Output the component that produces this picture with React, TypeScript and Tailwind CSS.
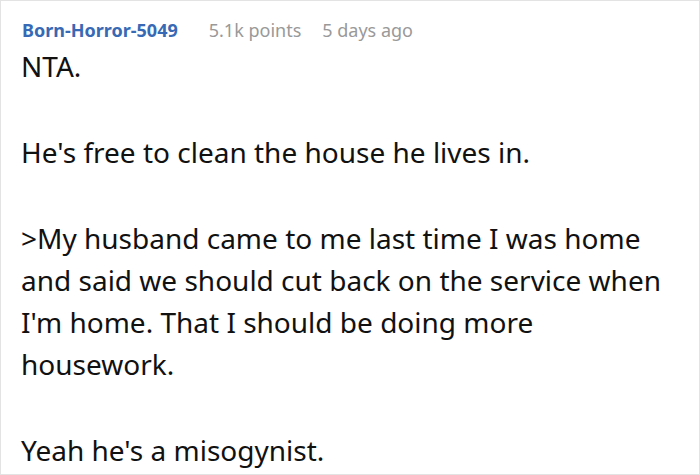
export default function App() {
  return (
    <div className="w-[700px] h-[475px] border border-[#e3e3e3] bg-white overflow-hidden" style={{ fontFamily: '"Noto Sans", sans-serif' }}>
      <div className="pl-[21px] pt-[16px] flex items-baseline text-[18px] leading-[26px]">
        <span className="font-bold text-[#3769b4]">Born-Horror-5049</span>
        <span className="ml-[31px] text-[#999999]">5.1k points</span>
        <span className="ml-[21px] text-[#999999]">5 days ago</span>
      </div>
      <div className="mt-[2px] pl-[20px] pr-[14px] text-[28px] leading-[42px] text-[#111111] flex flex-col gap-[44px]">
        <p>NTA.</p>
        <p>He's free to clean the house he lives in.</p>
        <p>&gt;My husband came to me last time I was home and said we should cut back on the service when I'm home. That I should be doing more housework.</p>
        <p>Yeah he's a misogynist.</p>
      </div>
    </div>
  );
}
